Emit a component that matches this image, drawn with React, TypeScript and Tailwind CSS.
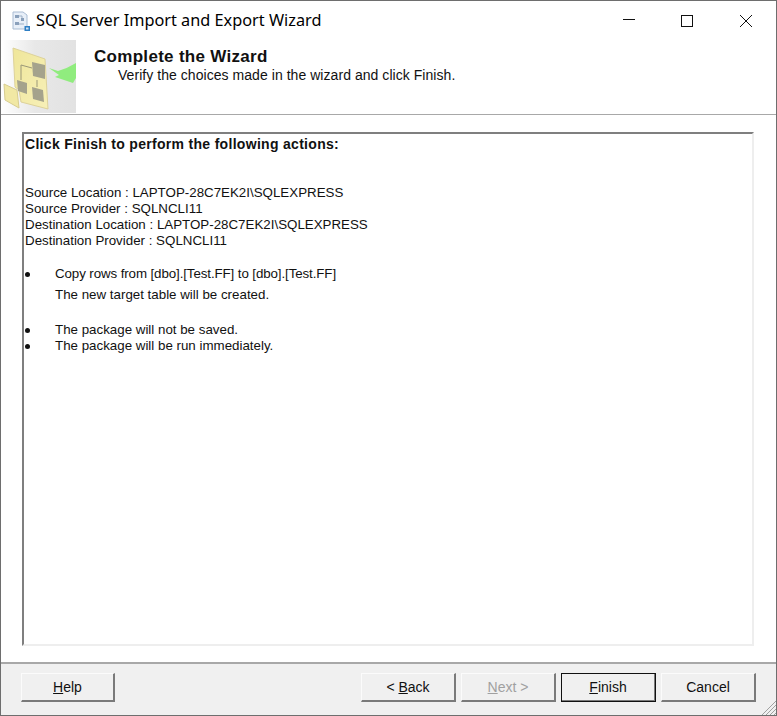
import React from 'react';

const FONT = "font-['Liberation_Sans',Arial,sans-serif]";

function WizButton({ children, isDefault, disabled, wide }: { children: React.ReactNode; isDefault?: boolean; disabled?: boolean; wide?: boolean }) {
  return (
    <button
      className={`relative h-[29px] bg-[#f0f0f0] text-[14px] flex items-center justify-center border-t border-l border-t-[#fbfbfb] border-l-[#fbfbfb] border-r-2 border-b-2 border-r-[#7a7a7a] border-b-[#7a7a7a] ${wide ? 'w-[95px]' : 'w-[94px]'} ${disabled ? 'text-[#a0a0a0]' : 'text-[#111]'} ${isDefault ? 'outline outline-1 outline-[#111] -outline-offset-1' : ''}`}
    >
      {children}
    </button>
  );
}

function Bullet({ children, className }: { children: React.ReactNode; className?: string }) {
  return (
    <div className={`flex h-4 items-center ${className ?? ''}`}>
      <span className="w-[5px] h-[5px] rounded-full bg-[#111] mr-[25px]" />
      <span>{children}</span>
    </div>
  );
}

function WizardArt() {
  return (
    <svg width="75" height="73" viewBox="0 0 75 73" className="blur-[0.4px] shrink-0">
      <defs>
        <linearGradient id="bg" x1="0" y1="0" x2="1" y2="0">
          <stop offset="0" stopColor="#ffffff" />
          <stop offset="0.45" stopColor="#e8e8e8" />
          <stop offset="1" stopColor="#e2e2e2" />
        </linearGradient>
        <linearGradient id="page" x1="0" y1="0" x2="1" y2="1">
          <stop offset="0" stopColor="#efe69a" />
          <stop offset="1" stopColor="#f7f0b8" />
        </linearGradient>
      </defs>
      <rect width="75" height="73" fill="url(#bg)" />
      <path d="M12 8 L44 19 L47 69 L20 62 L18 50 L14 47 Z" fill="url(#page)" stroke="#ddd29a" />
      <path d="M3 44 L16 50 L18 68 L4 60 Z" fill="#f1e8a4" stroke="#d8cd90" />
      <path d="M31 22 L44 25 L44 39 L32 36 Z" fill="#a5a38c" />
      <path d="M16 40 L26 43 L26 54 L17 51 Z" fill="#a5a38c" />
      <path d="M31 47 L42 50 L43 62 L32 59 Z" fill="#a5a38c" />
      <path d="M20 40 L20 25 L31 28 M36 47 L36 40" fill="none" stroke="#9b9878" strokeWidth="1" />
      <path d="M48 28 L57 31 Q67 28 75 23 L75 38 L72 43 L54 37 L58 35 Z" fill="#90ec7e" />
    </svg>
  );
}

function AppIcon() {
  return (
    <svg width="18" height="20" viewBox="0 0 18 20" className="blur-[0.3px]">
      <path d="M1 1 H11 L15 4 V18 H1 Z" fill="#e8eff8" stroke="#a9bcd3" />
      <path d="M3 4 H7 V7 H3 Z M9 7 H12 V10 H9 Z M3 11 H7 V14 H3 Z" fill="#8aa0bb" />
      <path d="M7 5 H10 V7 M7 13 H12" fill="none" stroke="#9db0c6" />
      <rect x="12.5" y="15" width="5.5" height="5" fill="#2f7fc4" />
      <rect x="14" y="16.5" width="2.5" height="2" fill="#cfe4f7" />
    </svg>
  );
}

export default function App() {
  return (
    <div className={`${FONT} w-[777px] h-[716px] flex flex-col bg-white border border-[#6e6e6e] overflow-hidden text-[#111]`}>
      {/* Title bar */}
      <div className="h-[39px] flex items-center shrink-0">
        <div className="ml-[11px] w-[19px] flex"><AppIcon /></div>
        <span className="ml-[5px] mb-[1px] font-['Noto_Sans',sans-serif] text-[16.3px] text-black">SQL Server Import and Export Wizard</span>
        <div className="ml-auto flex items-center">
          <svg width="14" height="14" viewBox="0 0 14 14" className="mr-[44px]"><path d="M1 5.5 H13" stroke="#111" /></svg>
          <svg width="14" height="14" viewBox="0 0 14 14" className="mr-[45px]"><rect x="1.5" y="1.5" width="11" height="11" fill="none" stroke="#111" /></svg>
          <svg width="14" height="14" viewBox="0 0 14 14" className="mr-[23px]"><path d="M1 1 L13 13 M13 1 L1 13" stroke="#111" /></svg>
        </div>
      </div>

      {/* Header */}
      <div className="h-[75px] shrink-0 flex items-start border-b border-b-[#a8a8a8]">
        <WizardArt />
        <div className="ml-[18px] pt-[7px]">
          <div className="text-[17px] leading-[19px] font-bold tracking-[0.3px]">Complete the Wizard</div>
          <div className="ml-[24px] mt-[1px] text-[14px] leading-[16px] tracking-[0.05px]">Verify the choices made in the wizard and click Finish.</div>
        </div>
      </div>

      {/* Report */}
      <div className="flex-1 min-h-0 px-[21px] pt-[17px] pb-[16px]">
        <div className="h-full w-[732px] border-t-2 border-l-2 border-t-[#7f7f7f] border-l-[#7f7f7f] border-r-2 border-b-2 border-r-[#eeeeee] border-b-[#eeeeee] pl-[1px] text-[13.33px] leading-4">
          <div className="pt-[2px] h-[51px] text-[14px] font-bold tracking-[0.3px]">Click Finish to perform the following actions:</div>
          <div>Source Location : LAPTOP-28C7EK2I\SQLEXPRESS</div>
          <div>Source Provider : SQLNCLI11</div>
          <div>Destination Location : LAPTOP-28C7EK2I\SQLEXPRESS</div>
          <div>Destination Provider : SQLNCLI11</div>
          <Bullet className="mt-[17px] tracking-[-0.1px]">Copy rows from [dbo].[Test.FF] to [dbo].[Test.FF]</Bullet>
          <div className="ml-[30px] mt-[5px]">The new target table will be created.</div>
          <Bullet className="mt-[19px]">The package will not be saved.</Bullet>
          <Bullet>The package will be run immediately.</Bullet>
        </div>
      </div>

      {/* Footer */}
      <div className="relative h-[53px] shrink-0 bg-[#f0f0f0] border-t-2 border-t-[#a8a8a8] flex items-start pt-[9px] pl-[20px]">
        <WizButton>
          <span><u>H</u>elp</span>
        </WizButton>
        <div className="ml-auto mr-[20px] flex gap-[5px]">
          <WizButton wide>
            <span>&lt; <u>B</u>ack</span>
          </WizButton>
          <WizButton wide disabled>
            <span><u>N</u>ext &gt;</span>
          </WizButton>
          <WizButton wide isDefault>
            <span><u>F</u>inish</span>
          </WizButton>
          <WizButton wide>Cancel</WizButton>
        </div>
        <svg width="16" height="16" viewBox="0 0 16 16" className="absolute right-0 bottom-0">
          <path d="M16 2 L2 16 M16 6 L6 16 M16 10 L10 16 M16 14 L14 16" stroke="#a0a0a0" />
        </svg>
      </div>
    </div>
  );
}
